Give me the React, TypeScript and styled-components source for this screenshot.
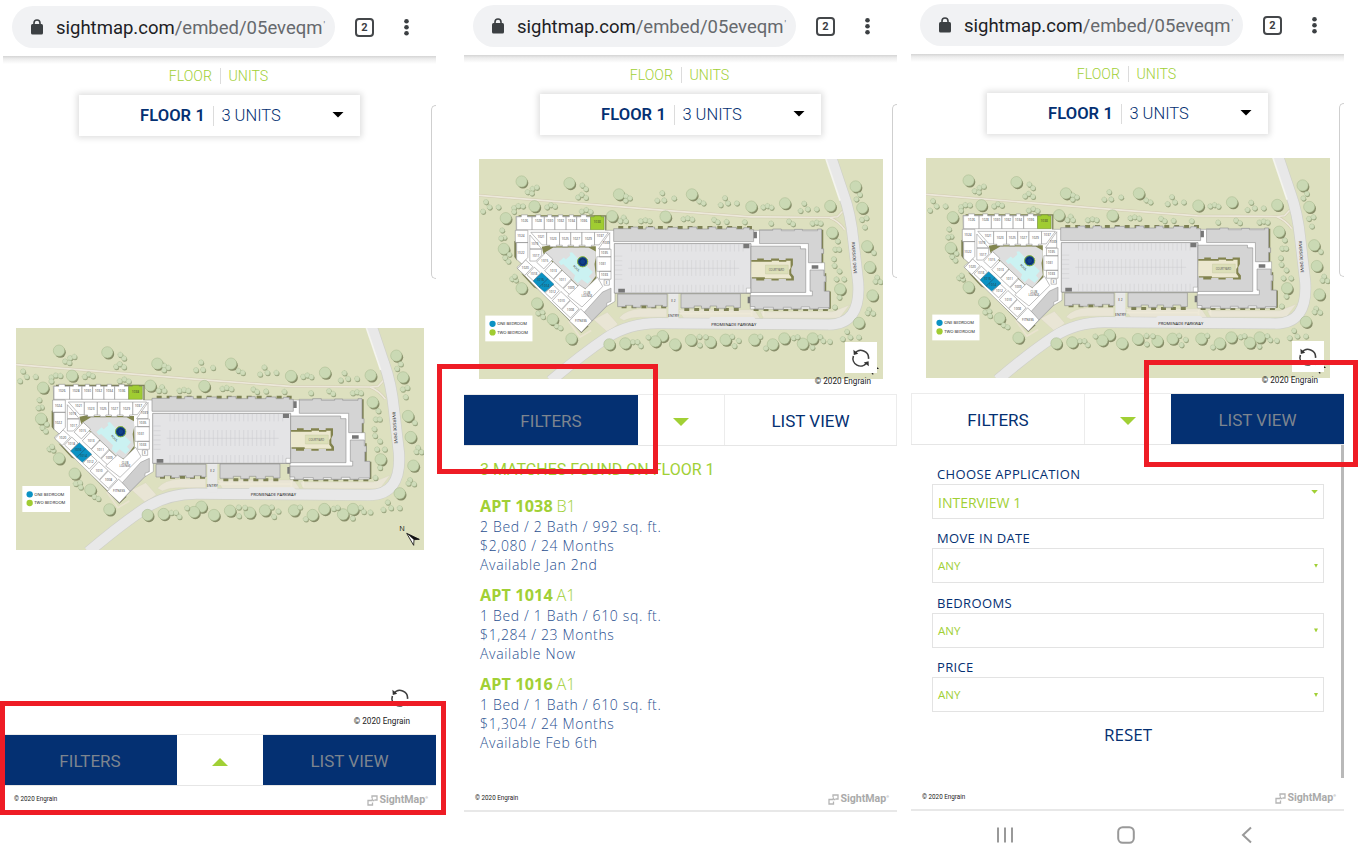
import React from 'react';
import styled, { createGlobalStyle } from 'styled-components';

const navy = '#043072';
const green = '#a1d035';
const red = '#ee1c25';

const GlobalStyle = createGlobalStyle`
  * { box-sizing: border-box; }
  body { margin: 0; background: #fff; overflow: hidden; font-family: Roboto, sans-serif; }
  #root { height: 859px; }
`;

const Board = styled.main`
  position: relative;
  display: flex;
  align-items: flex-start;
  width: 1358px;
  height: 859px;
  padding-left: 3px;
  overflow: hidden;
`;

const Phone = styled.section<{ $top: number; $gap: number }>`
  position: relative;
  display: flex;
  flex-direction: column;
  flex: none;
  width: 433px;
  height: ${(p) => 859 - p.$top}px;
  margin-top: ${(p) => p.$top}px;
  margin-right: ${(p) => p.$gap}px;
`;

const BrowserBar = styled.header`
  display: flex;
  align-items: center;
  flex: none;
  height: 54px;
  padding: 0 22px 4px 9px;
  color: #3c4043;
`;

const AddressPill = styled.div`
  display: flex;
  align-items: center;
  width: 323px;
  height: 42px;
  margin-right: 20px;
  padding: 0 0 0 18px;
  border-radius: 21px;
  background: #f1f2f4;
  svg { flex: none; }
`;

const Url = styled.div`
  display: flex;
  flex: none;
  margin-left: 12px;
  padding-top: 1px;
  white-space: nowrap;
  font-size: 18.5px;
  line-height: 26px;
  color: #66696d;
  b { font-weight: 400; color: #202124; }
  small { font-size: 9px; line-height: 20px; margin-left: 1px; }
`;

const TabCount = styled.div`
  width: 19px;
  height: 19px;
  margin-right: 30px;
  border: 2px solid #44474a;
  border-radius: 4px;
  font: 700 11px/15px Roboto, sans-serif;
  text-align: center;
`;

const ToolbarShadow = styled.div`
  flex: none;
  height: 8px;
  background: linear-gradient(#d4d4d4, #ececec 35%, #fff);
`;

const Caption = styled.div`
  display: flex;
  justify-content: center;
  align-items: center;
  flex: none;
  height: 23px;
  padding-right: 2px;
  font-weight: 300;
  font-size: 14.2px;
  color: ${green};
`;

const Rule = styled.i<{ $h: number }>`
  width: 1px;
  height: ${(p) => p.$h}px;
  margin: 0 7.5px 0 8px;
  background: #dcdcdc;
`;

const FloorSelect = styled.div`
  display: flex;
  align-items: center;
  flex: none;
  width: 281px;
  height: 41px;
  margin: 8px 0 0 76px;
  padding-left: 61px;
  background: #fff;
  box-shadow: 0 0 6px 2px rgba(0, 0, 0, 0.13);
  font-size: 16.5px;
  font-weight: 300;
  color: ${navy};
  b { font-weight: 600; letter-spacing: 0.1px; }
`;

const Caret = styled.i<{ $w: number; $h: number; $color: string; $up?: boolean }>`
  width: ${(p) => p.$w}px;
  height: ${(p) => p.$h}px;
  background: ${(p) => p.$color};
  clip-path: ${(p) => (p.$up ? 'polygon(50% 0, 100% 100%, 0 100%)' : 'polygon(0 0, 100% 0, 50% 100%)')};
`;

const FloorCaret = styled(Caret)`
  margin: 0 16px 2px auto;
`;

const EdgeTab = styled.div`
  position: absolute;
  right: 0;
  top: 103px;
  width: 5px;
  height: 174px;
  border: 1px solid #cfcfcf;
  border-right: 0;
  border-radius: 6px 0 0 6px;
`;

const Stage = styled.div<{ $h: number; $pad: number; $left: number }>`
  position: relative;
  flex: none;
  height: ${(p) => p.$h}px;
  padding: ${(p) => p.$pad}px 0 0 ${(p) => p.$left}px;
  svg { display: block; }
`;

const RefreshButton = styled.div`
  position: absolute;
  right: 20px;
  bottom: 21px;
  display: grid;
  place-items: center;
  width: 32px;
  height: 31px;
  background: #fff;
`;

const MapCredit = styled.div`
  position: absolute;
  right: 26px;
  bottom: 7px;
  font-size: 8.2px;
  line-height: 12px;
  color: #222;
`;

const ButtonBar = styled.div`
  display: grid;
  grid-template-columns: 174px 86px 173px;
  flex: none;
  height: 52px;
  border-top: 1px solid #ececec;
  border-bottom: 1px solid #e6e6e6;
`;

const BarButton = styled.div<{ $dark?: boolean }>`
  display: grid;
  place-items: center;
  padding-top: 1px;
  border: 1px solid ${(p) => (p.$dark ? navy : '#ececec')};
  border-width: 0 1px;
  background: ${(p) => (p.$dark ? navy : '#fff')};
  color: ${(p) => (p.$dark ? '#7d858f' : navy)};
  font-size: 17px;
`;

const BarToggle = styled.div`
  display: grid;
  place-items: center;
  padding-top: 4px;
`;

const Results = styled.div`
  padding: 14px 0 0 16px;
`;

const ResultsTitle = styled.div`
  margin-bottom: 17px;
  font-size: 16px;
  line-height: 20px;
  font-weight: 400;
  color: ${green};
`;

const Apartment = styled.article`
  margin-bottom: 12px;
  font: 300 14px/19px 'Open Sans', sans-serif;
  letter-spacing: 0.66px;
  color: #2a5090;
`;

const AptName = styled.div`
  height: 20px;
  font-size: 16.2px;
  letter-spacing: 0;
  word-spacing: -0.5px;
  color: ${green};
  b { font-weight: 700; word-spacing: 0; letter-spacing: 0.1px; }
`;

const Filters = styled.div`
  display: flex;
  flex-direction: column;
  padding: 18.7px 20px 0 21px;
  font-family: 'Open Sans', sans-serif;
`;

const FieldLabel = styled.label`
  padding-left: 5px;
  font-size: 13px;
  line-height: 20px;
  letter-spacing: 0.35px;
  color: ${navy};
`;

const FieldBox = styled.div<{ $large?: boolean }>`
  display: flex;
  align-items: ${(p) => (p.$large ? 'flex-start' : 'center')};
  justify-content: space-between;
  height: 35px;
  margin-bottom: 9.6px;
  padding: ${(p) => (p.$large ? '5px 5px 0' : '0 5px')};
  border: 1px solid #e3e3e3;
  color: ${green};
  font-size: ${(p) => (p.$large ? 14 : 11.5)}px;
  span { padding-top: ${(p) => (p.$large ? 3 : 0)}px; }
`;

const Reset = styled.div`
  margin-top: 1px;
  text-align: center;
  font-size: 17px;
  line-height: 24px;
  color: ${navy};
`;

const ScrollThumb = styled.div`
  position: absolute;
  right: 0;
  top: 445px;
  width: 3px;
  height: 333px;
  background: #b9b9b9;
`;

const Footer = styled.footer`
  display: flex;
  align-items: center;
  justify-content: space-between;
  flex: none;
  height: 26px;
  margin-top: auto;
  padding: 0 8px 0 11px;
  border-bottom: 2px solid #e8e8e8;
  font-size: 6.3px;
  color: #222;
`;

const Brand = styled.div`
  display: flex;
  align-items: center;
  gap: 1px;
  padding-top: 2px;
  color: #aaa;
  font: 700 10.6px/14px Roboto, sans-serif;
  sup { font-size: 3.5px; line-height: 4px; margin: 0 0 5px -1px; }
`;

const SystemNav = styled.nav<{ $h: number }>`
  display: flex;
  align-items: center;
  justify-content: space-between;
  flex: none;
  height: ${(p) => p.$h}px;
  padding: 0 88px 0 85px;
`;

const Highlight = styled.div<{ $x: number; $y: number; $w: number; $h: number }>`
  position: absolute;
  left: ${(p) => p.$x}px;
  top: ${(p) => p.$y}px;
  width: ${(p) => p.$w}px;
  height: ${(p) => p.$h}px;
  border: 5px solid ${red};
`;

type Pt = [number, number];

const trees: Pt[] = [
  [147, 92], [292, 97], [442, 131], [186, 167], [99, 203], [421, 197], [93, 296], [147, 415], [194, 461],
  [241, 509], [298, 568], [413, 585], [461, 582], [574, 560], [552, 576], [612, 585], [583, 198],
  [663, 131], [843, 168], [945, 158], [1082, 166], [1159, 107], [1179, 172], [1088, 247], [1194, 288],
  [1202, 351], [1112, 418], [1210, 437], [1169, 520], [660, 572], [719, 578], [765, 571], [852, 571],
  [908, 585], [943, 567], [999, 583], [1029, 567],
];

const shrubs: Pt[] = [
  [165, 124], [180, 114], [193, 110], [178, 128], [331, 104], [342, 115], [318, 140], [329, 132], [342, 141],
  [463, 137], [475, 143], [462, 150], [558, 150], [573, 127], [579, 149], [609, 143], [39, 154], [30, 183],
  [50, 170], [77, 170], [124, 172], [137, 166], [151, 167], [124, 184], [224, 170], [236, 163], [248, 168],
  [329, 183], [343, 178], [356, 184], [446, 212], [456, 201], [463, 212], [508, 212], [522, 209], [535, 212],
  [88, 240], [95, 262], [85, 264], [97, 323], [110, 313], [107, 334], [118, 387], [130, 391], [126, 380],
  [197, 491], [210, 488], [212, 502], [253, 530], [265, 536], [484, 578], [498, 578], [508, 590], [531, 564],
  [685, 152], [698, 158], [763, 142], [750, 163], [772, 158], [799, 158], [879, 170], [892, 166], [904, 171],
  [1003, 159], [992, 181], [1014, 176], [1041, 176], [1172, 132], [1161, 146], [637, 206], [650, 203],
  [664, 207], [730, 208], [741, 215], [768, 214], [823, 215], [903, 219], [957, 213], [969, 221], [1028, 219],
  [1041, 216], [1053, 219], [1178, 208], [1192, 203], [1187, 231], [1105, 273], [1097, 298], [1109, 298],
  [1093, 327], [1095, 347], [1110, 364], [1101, 388], [1124, 388], [1110, 443], [1096, 473], [1214, 308],
  [1224, 383], [1219, 395], [1234, 396], [1200, 480], [1195, 490], [1212, 492], [1133, 547], [1120, 569],
  [1143, 564], [1169, 564], [686, 562], [705, 563], [687, 588], [785, 562], [805, 574], [792, 590], [870, 562],
  [887, 597], [971, 566], [983, 563], [1028, 595], [1052, 563], [1061, 575], [1081, 577],
];

const topUnits: [number, number, string][] = [
  [132, 47, '1026'], [179, 37, '1028'], [216, 32, '1030'], [248, 34, '1032'], [282, 32, '1034'], [314, 42, '1036'],
];
const innerUnits: [number, number, string][] = [
  [223, 39, '1023'], [262, 34, '1025'], [296, 34, '1027'], [330, 38, '1029'],
];
const slantUnits: [number, number, number, number, string][] = [
  [158, 353, 30, 36, '1020'], [184, 372, 26, 32, '1018'], [240, 426, 26, 34, '1012'],
  [267, 452, 38, 38, '1010'], [295, 479, 36, 38, '1008'], [327, 513, 50, 50, 'FITNESS'],
  [217, 332, 30, 40, '1015'], [243, 361, 36, 38, '1013'], [271, 388, 38, 38, '1011'],
  [297, 414, 30, 36, '1009'],
];

const stalls = (x0: number, x1: number, y: number, h: number) => {
  let d = '';
  for (let x = x0; x <= x1; x += 13) d += `M${x} ${y}v${h}`;
  return d;
};

const bumps = (x0: number, x1: number, y: number) => {
  let d = '';
  for (let x = x0; x < x1; x += 30) d += `M${x} ${y - 5}h15v9h-15z`;
  return d;
};

const SitePlan = ({ width, height }: { width: number; height: number }) => (
  <svg width={width} height={height} viewBox="18 24 1224 666" preserveAspectRatio="none" fontFamily="Open Sans, sans-serif">
    <rect x="18" y="24" width="1224" height="666" fill="#dde0bf" />
    <g fill="none">
      <path d="M18 134L600 181L840 199L1080 201L1104 199L1120 182M1080 201Q1110 214 1126 238" stroke="#d2cbb0" strokeWidth="8" />
      <path d="M18 134L600 181L840 199L1080 201L1104 199L1120 182M1080 201Q1110 214 1126 238" stroke="#ece8da" strokeWidth="5" />
      <path d="M290 515l34 48 34-20" stroke="#e9e3cf" strokeWidth="5" />
      <path d="M365 510l42 38 32-24-32-36zM442 505q20-26 70-28h75v26h-80q-30 0-50 10zM622 480h230l20 30H640zM870 486H1090l50-20-30 40H880z" fill="#e9e5d5" stroke="#d4d0bb" strokeWidth="1" />
      <path d="M1085 20L1122 130Q1144 190 1152 270L1167 400Q1175 527 1075 525L560 521Q470 522 405 565Q330 615 235 696" stroke="#cfd0c8" strokeWidth="35" />
      <path d="M1085 20L1122 130Q1144 190 1152 270L1167 400Q1175 527 1075 525L560 521Q470 522 405 565Q330 615 235 696" stroke="#e8e8e8" strokeWidth="31" />
      <path d="M1068 20L1112 150" stroke="#f4f4ee" strokeWidth="5" />
      <path d="M607 430v88" stroke="#e8e8e8" strokeWidth="30" />
      <path d="M712 512l8-10h130l10 10z" fill="#e8e8e8" />
    </g>

    {trees.map(([x, y]) => (
      <g key={`${x}-${y}`}>
        <circle cx={x + 4} cy={y + 5} r="16.5" fill="#868c68" />
        <circle cx={x} cy={y} r="17" fill="#cad9b4" stroke="#a5b78d" strokeWidth="1.5" />
      </g>
    ))}
    {shrubs.map(([x, y]) => (
      <g key={`${x}-${y}`}>
        <circle cx={x + 2} cy={y + 3} r="7.5" fill="#9aa37e" />
        <circle cx={x} cy={y} r="7.5" fill="#cfdcba" stroke="#a2b68e" strokeWidth="1.5" strokeDasharray="4 1.5" />
      </g>
    ))}

    <g fill="#7d8153">
      <path d="M138 194H404V240H136zM131 270l-6 3v48l8 10zM145 370L185 413L204 421L240 461L328 551L350 530L290 480L190 395z" />
      <path d={bumps(440, 850, 232) + bumps(450, 590, 472) + bumps(640, 810, 480) + bumps(850, 1080, 480)} />
      <path d="M1050 238h11v100h-11zM1064 370h6v55h14v52h-20z" />
    </g>

    <path d="M130 198H400V240H868V238H1055V338H1065V425H1078V478H840V430H430V455L405 470L328 548L290 510L185 407L133 352L150 337L131 325V240z" fill="#fff" stroke="#8a8a8a" strokeWidth="1.5" />

    <g fill="#fff" stroke="#777" strokeWidth="1.4">
      {topUnits.map(([x, w, n]) => (
        <path key={n} d={`M${x} 238V199H${x + w * 0.3}V193H${x + w * 0.7}V199H${x + w}V238z`} />
      ))}
      <path d="M356 238V199H367V196H388V199H397V238z" fill="#a0cc32" stroke="#67842a" />
      <path d="M128 240h38v37h-38zM132 277h34v45l-18 20-16-14z" />
    </g>

    <path d="M208 290l30-6 12 4H372v20l2 76-30 34-25-6-64-62-42-40z" fill="#82864f" />
    <path d="M216 308l27-16H350l22 12v20l-4 18 4 36-28 38-24-6-64-62z" fill="#dedede" />
    <path d="M292 308l8-2 18 20 12-8 16 12-6 14 23 22-12 14 8 9-12 13-18-14-12 12-12-12 4-12-36-34-6 4-8-10 16-14 6 6 14-12z" fill="#cbf2f2" />

    <g fill="#fff" stroke="#777" strokeWidth="1.4">
      <path d="M175 246h48v38h-14zM172 254l36 42h-36zM172 297h36v18l-18 18h-18zM368 246h42l-28 38h-14zM414 247v49h-34zM383 297h35v23h-35zM375 320h43v44h-43zM383 364h35v24h-35zM397 390h16v16h-16z" />
      {innerUnits.map(([x, w, n]) => (
        <path key={n} d={`M${x} 246H${x + w}V285H${x + w * 0.75}V290H${x + w * 0.25}V285H${x}z`} />
      ))}
      {slantUnits.map(([x, y, w, h, n]) => (
        <rect key={n} x={x - w / 2} y={y - h / 2} width={w} height={h} transform={`rotate(43 ${x} ${y})`} />
      ))}
      <path d="M287 438L322 405L340 417L377 382L393 410L330 472z" />
      <path d="M208 368L227 386L200 412L182 393zM227 386L245 403L217 427L200 412z" fill="#0b92c3" stroke="#1a6284" />
    </g>
    <path d="M337 488L392 427L418 415V455L405 460V469L360 514z" fill="#cfcfcf" stroke="#8b8b8b" strokeWidth="1.5" />
    <g fontSize="9.5" textAnchor="middle" fill="#333">
      {topUnits.map(([x, w, n]) => <text key={n} x={x + w / 2} y="216">{n}</text>)}
      {innerUnits.map(([x, w, n]) => <text key={n} x={x + w / 2} y="270">{n}</text>)}
      {slantUnits.map(([x, y, , , n]) => <text key={n} x={x} y={y + 4}>{n}</text>)}
      <text x="204" y="394">1016</text>
      <text x="220" y="411">1014</text>
      <text x="376" y="219">1038</text>
      <text x="145" y="260">1024</text>
      <text x="145" y="311">1022</text>
      <text x="206" y="262">1021</text>
      <text x="187" y="284">1019</text>
      <text x="190" y="320">1017</text>
      <text x="385" y="261">1037</text>
      <text x="403" y="282">1039</text>
      <text x="398" y="311">1035</text>
      <text x="392" y="344">1031</text>
      <text x="398" y="379">1033</text>
      <text x="405" y="403">E</text>
      <text x="345" y="432" fontSize="8">CLUB</text>
      <text x="345" y="441" fontSize="8">LOUNGE</text>
      <text x="313" y="358" fontSize="9" transform="rotate(42 313 355)">POOL</text>
      <text x="607" y="502" fontSize="11">ENTRY</text>
      <text x="607" y="457">E 2</text>
    </g>
    <circle cx="332" cy="335" r="16" fill="#10418a" />
    <circle cx="332" cy="335" r="15.5" fill="none" stroke="#8fbb3a" strokeWidth="3" />
    <circle cx="332" cy="335" r="9" fill="none" stroke="#0c2c66" strokeWidth="3" />

    <path d="M428 280h414v150H428z" fill="#e4e4e6" stroke="#858585" strokeWidth="2" />
    <path d={stalls(480, 820, 282, 22) + stalls(480, 800, 330, 48) + stalls(480, 820, 405, 24) + 'M470 355H806'} stroke="#c8c8ca" strokeWidth="1.3" fill="none" />
    <path d="M430 318h22M430 332h22M430 346h22M430 360h22M430 374h22M430 388h22" stroke="#c8c8ca" strokeWidth="1.3" />
    <g fill="#d4d4d4" stroke="#8e8e8e" strokeWidth="1.8">
      <path d="M426 235h52v-5h22v6h24v-6h26v6h40v-5h30v5h34v-6h24v6h36v-6h22v6h32v-5h30v5h22v-4h18v6h12v36H426z" />
      <path d="M438 433h150v38h-14v-4h-22v6h-24v-6h-20v6h-24v-6h-22v4h-24z" />
      <path d="M630 432h180v42h-20v-5h-24v7h-28v-7h-20v7h-26v-7h-22v6h-40z" />
      <path d="M868 240h40v-4h26v5h40v-4h24v4h46v-5h12v60h6v14h-6v28h-40v-58H868z" />
      <path d="M842 288h150v8h16v132H842z" />
      <path d="M840 438h188v-14h-7v-64h42v18h6v18h-5v28h16v50h-34v4h-26v-6h-26v6h-30v-5h-24v6h-30v-6h-30v5h-26v-7h-14z" />
    </g>
    <path d="M843 330h18v-5h20v5h22v-5h24v5h20v-5h22v20l-5 10v15l8 10v12h-24v-5h-22v5h-22v-5h-22v5h-24v-6h-13z" fill="#82834e" />
    <path d="M843 335h62v-3h22v3h22v-3h13v22l-4 6v14l6 8v4h-80v-4h-41z" fill="#ece8cf" />
    <path d="M886 345h69v27h-69z" fill="#dcdfb8" stroke="#bfc29a" />
    <text x="919" y="362" fontSize="8" textAnchor="middle" fill="#555">COURTYARD</text>
    <g fill="#777">
      <path d="M850 244h10v20h-10zM819 281h18v13h-18zM440 417h20v11h-20zM1026 346h20v10h-20zM832 441h7v20h-7z" />
    </g>
    <path d="M828 415h13v14h-13z" fill="#fff" stroke="#777" />
    <path d="M844 484v16M880 484v16M625 492h220" stroke="#eee9d8" strokeWidth="5" />

    <rect x="37" y="498" width="143" height="78" fill="#fff" />
    <circle cx="59" cy="523" r="9.5" fill="#0b92c3" />
    <circle cx="59" cy="549" r="9.5" fill="#a0cc32" />
    <g fontSize="12.5" fill="#111">
      <text x="73" y="527" textLength="90">ONE BEDROOM</text>
      <text x="73" y="553" textLength="93">TWO BEDROOM</text>
      <text x="722" y="529" textLength="136">PROMENADE PARKWAY</text>
      <text transform="translate(1147 275) rotate(86)" textLength="97">RIVERSIDE DRIVE</text>
      <text x="1168" y="634" fontSize="22">N</text>
    </g>
    <path d="M1190 640l38 18-16 1-1 17z" fill="#fff" stroke="#111" strokeWidth="2.5" />
    <path d="M1190 640l38 18-17 1z" fill="#111" />
  </svg>
);

const RefreshIcon = () => (
  <svg width="20" height="20" viewBox="0 0 20 20">
    <g fill="none" stroke="#3e3e3e" strokeWidth="1.6">
      <path d="M3.8 5.5A7.6 7.6 0 0 1 17.5 10.8" />
      <path d="M2.4 8A7.6 7.6 0 0 0 15.6 15.1" />
    </g>
    <path d="M2.4 1.8L7.2 5.8 2.8 7zM17.8 18.2L12.8 14.4l4.8-1.2z" fill="#333" />
  </svg>
);

const LockIcon = () => (
  <svg width="14" height="16" viewBox="0 0 14 16">
    <rect x="1" y="5" width="12" height="10.5" rx="1.5" fill="#3c4043" />
    <path d="M4 6V4a3 3 0 0 1 6 0v2" fill="none" stroke="#3c4043" strokeWidth="1.6" />
  </svg>
);

const MenuDots = () => (
  <svg width="6" height="20" viewBox="0 0 6 20" fill="#3c4043">
    <circle cx="2.5" cy="4.2" r="2.3" />
    <circle cx="2.5" cy="10.2" r="2.3" />
    <circle cx="2.5" cy="16.2" r="2.3" />
  </svg>
);

const BrandMark = () => (
  <svg width="11" height="11" viewBox="0 0 11 11" fill="none" stroke="#b5b5b5" strokeWidth="1.3">
    <path d="M5 3V1h5v4H7.5M5 5.5H1V10h4.5V7.5M5.3 3.2v2.3M5.3 5.5h2" />
  </svg>
);

type Mode = 'both' | 'filters' | 'list';

const PhoneTop = () => (
  <>
    <BrowserBar>
      <AddressPill>
        <LockIcon />
        <Url><b>sightmap.com</b>/embed/05eveqm<small>'</small></Url>
      </AddressPill>
      <TabCount>2</TabCount>
      <MenuDots />
    </BrowserBar>
    <ToolbarShadow />
    <Caption>FLOOR<Rule $h={16} />UNITS</Caption>
    <FloorSelect>
      <b>FLOOR 1</b><Rule $h={20} />3 UNITS
      <FloorCaret $w={12} $h={6} $color="#000" />
    </FloorSelect>
    <EdgeTab />
  </>
);

const Bar = ({ mode }: { mode: Mode }) => (
  <ButtonBar>
    <BarButton $dark={mode !== 'list'}>FILTERS</BarButton>
    <BarToggle><Caret $w={16} $h={8} $color={green} $up={mode === 'both'} /></BarToggle>
    <BarButton $dark={mode !== 'filters'}>LIST VIEW</BarButton>
  </ButtonBar>
);

const PhoneFooter = () => (
  <Footer>
    <span>© 2020 Engrain</span>
    <Brand><BrandMark />SightMap<sup>®</sup></Brand>
  </Footer>
);

const MapStage = ({ h, pad, left, w, mh }: { h: number; pad: number; left: number; w: number; mh: number }) => (
  <Stage $h={h} $pad={pad} $left={left}>
    <SitePlan width={w} height={mh} />
    <RefreshButton><RefreshIcon /></RefreshButton>
    <MapCredit>© 2020 Engrain</MapCredit>
  </Stage>
);

const apartments = [
  { name: 'APT 1038', plan: 'B1', size: '2 Bed / 2 Bath / 992 sq. ft.', price: '$2,080 / 24 Months', when: 'Available Jan 2nd' },
  { name: 'APT 1014', plan: 'A1', size: '1 Bed / 1 Bath / 610 sq. ft.', price: '$1,284 / 23 Months', when: 'Available Now' },
  { name: 'APT 1016', plan: 'A1', size: '1 Bed / 1 Bath / 610 sq. ft.', price: '$1,304 / 24 Months', when: 'Available Feb 6th' },
];

export default function App() {
  return (
    <>
      <GlobalStyle />
      <Board>
        <Phone $top={2} $gap={28}>
          <PhoneTop />
          <MapStage h={598} pad={192} left={13} w={408} mh={222} />
          <Bar mode="both" />
          <PhoneFooter />
          <SystemNav $h={46} />
        </Phone>

        <Phone $top={1} $gap={14}>
          <PhoneTop />
          <MapStage h={259} pad={24} left={15} w={404} mh={220} />
          <Bar mode="filters" />
          <Results>
            <ResultsTitle>3 MATCHES FOUND ON FLOOR 1</ResultsTitle>
            {apartments.map((a) => (
              <Apartment key={a.name}>
                <AptName><b>{a.name}</b> {a.plan}</AptName>
                <div>{a.size}</div>
                <div>{a.price}</div>
                <div>{a.when}</div>
              </Apartment>
            ))}
          </Results>
          <PhoneFooter />
          <SystemNav $h={47} />
        </Phone>

        <Phone $top={0} $gap={0}>
          <PhoneTop />
          <MapStage h={259} pad={24} left={15} w={404} mh={220} />
          <Bar mode="list" />
          <Filters>
            <FieldLabel>CHOOSE APPLICATION</FieldLabel>
            <FieldBox $large><span>INTERVIEW 1</span><Caret $w={7} $h={4} $color={green} /></FieldBox>
            {['MOVE IN DATE', 'BEDROOMS', 'PRICE'].map((label) => (
              <React.Fragment key={label}>
                <FieldLabel>{label}</FieldLabel>
                <FieldBox><span>ANY</span><Caret $w={4} $h={4} $color={green} /></FieldBox>
              </React.Fragment>
            ))}
            <Reset>RESET</Reset>
          </Filters>
          <ScrollThumb />
          <PhoneFooter />
          <SystemNav $h={48}>
            <svg width="18" height="18" viewBox="0 0 18 18" stroke="#999" strokeWidth="2">
              <path d="M2 1.5v15M9 1.5v15M16 1.5v15" />
            </svg>
            <svg width="18" height="18" viewBox="0 0 18 18" fill="none" stroke="#999" strokeWidth="2">
              <rect x="1.2" y="1.2" width="15.6" height="15.6" rx="4.5" />
            </svg>
            <svg width="18" height="18" viewBox="0 0 18 18" fill="none" stroke="#999" strokeWidth="2">
              <path d="M13 1.5L5 9l8 7.5" />
            </svg>
          </SystemNav>
        </Phone>

        <Highlight $x={0} $y={701} $w={446} $h={114} />
        <Highlight $x={437} $y={364} $w={221} $h={110} />
        <Highlight $x={1144} $y={360} $w={214} $h={107} />
      </Board>
    </>
  );
}
